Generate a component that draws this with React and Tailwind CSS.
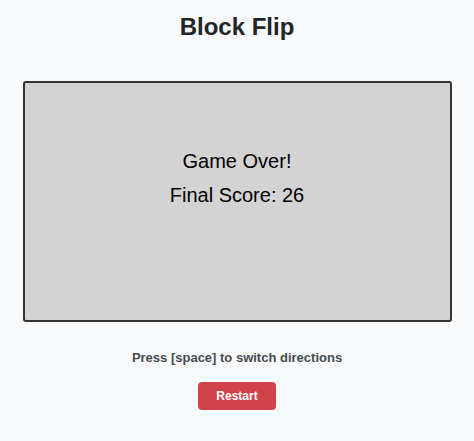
import React from 'react';

function App() {
  return (
    <div
      className="min-h-screen bg-[#f8f9fa] flex flex-col items-center"
      style={{ fontFamily: '"Liberation Sans", Arial, sans-serif' }}
    >
      <h1 className="text-[24px] font-bold text-[#212529] mt-[13px] leading-[28px]">Block Flip</h1>

      <div className="mt-[40px] w-[429px] h-[241px] bg-[#d3d3d3] border-2 border-[#333] rounded-[3px] flex flex-col items-center justify-center gap-[11px] pb-[46px] text-black">
        <div className="text-[20px] leading-[23px]">Game Over!</div>
        <div className="text-[20px] leading-[23px]">Final Score: 26</div>
      </div>

      <p className="mt-[28px] text-[13px] font-bold text-[#454b52] leading-[16px]">
        Press [space] to switch directions
      </p>

      <button className="mt-[16px] w-[78px] h-[28px] bg-[#d1434b] text-white text-[12px] font-bold rounded-[4px]">
        Restart
      </button>
    </div>
  );
}

export default App;
